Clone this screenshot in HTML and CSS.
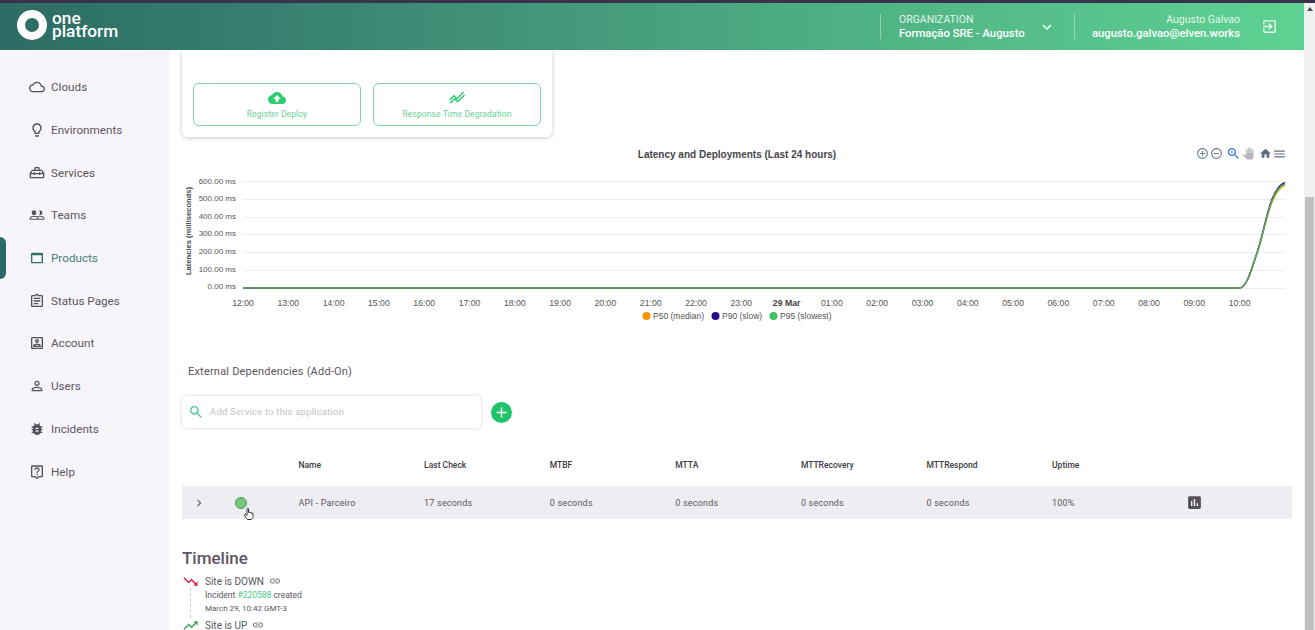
FILE: index.html
```html
<!DOCTYPE html>
<html lang="en">
<head>
  <meta charset="UTF-8">
  <title>One Platform</title>
  <link rel="stylesheet" href="styles.css">
</head>
<body>
  <div class="top-strip"></div>
  <div class="page">
    <div class="app">
      <header class="header">
        <div class="logo">
          <div class="logo-ring"></div>
          <div class="logo-text">
            <div class="logo-line">one</div>
            <div class="logo-line">platform</div>
          </div>
        </div>
        <div class="org">
          <div class="org-label">ORGANIZATION</div>
          <div class="org-name">Formação SRE - Augusto</div>
        </div>
        <svg class="org-chevron" viewBox="0 0 24 24"><path d="M16.59 8.59L12 13.17 7.41 8.59 6 10l6 6 6-6z"/></svg>
        <div class="user">
          <div class="user-name">Augusto Galvao</div>
          <div class="user-mail">augusto.galvao@elven.works</div>
        </div>
        <svg class="logout" viewBox="0 0 24 24"><path d="M10.09 15.59L11.5 17l5-5-5-5-1.41 1.41L12.67 11H3v2h9.67l-2.58 2.59zM19 3H5c-1.11 0-2 .9-2 2v4h2V5h14v14H5v-4H3v4c0 1.1.89 2 2 2h14c1.1 0 2-.9 2-2V5c0-1.1-.9-2-2-2z"/></svg>
      </header>

      <div class="layout">
        <nav class="sidebar">
          <div class="nav-item">
            <svg class="nav-icon" viewBox="0 0 24 24"><path d="M19.35 10.04C18.67 6.59 15.64 4 12 4 9.11 4 6.6 5.64 5.35 8.04 2.34 8.36 0 10.91 0 14c0 3.31 2.69 6 6 6h13c2.76 0 5-2.24 5-5 0-2.64-2.05-4.78-4.65-4.96zM19 18H6c-2.21 0-4-1.79-4-4 0-2.05 1.53-3.76 3.56-3.97l1.07-.11.5-.95C8.08 7.14 9.94 6 12 6c2.62 0 4.88 1.86 5.39 4.43l.3 1.5 1.53.11c1.56.1 2.78 1.41 2.78 2.96 0 1.65-1.35 3-3 3z"/></svg>
            Clouds
          </div>
          <div class="nav-item">
            <svg class="nav-icon" viewBox="0 0 24 24"><path d="M9 21c0 .55.45 1 1 1h4c.55 0 1-.45 1-1v-1H9v1zm3-19C8.14 2 5 5.14 5 9c0 2.38 1.19 4.47 3 5.74V17c0 .55.45 1 1 1h6c.55 0 1-.45 1-1v-2.26c1.81-1.27 3-3.36 3-5.74 0-3.86-3.14-7-7-7zm2.85 11.1l-.85.6V16h-4v-2.3l-.85-.6C7.8 12.16 7 10.63 7 9c0-2.76 2.24-5 5-5s5 2.24 5 5c0 1.63-.8 3.16-2.15 4.1z"/></svg>
            Environments
          </div>
          <div class="nav-item">
            <svg class="nav-icon" viewBox="0 0 24 24"><path d="M8 7V5c0-1.1.9-2 2-2h4c1.1 0 2 .9 2 2v2h2.5c.8 0 1.5.4 1.9 1.1L23 12v6c0 1.1-.9 2-2 2H3c-1.1 0-2-.9-2-2v-6l2.6-3.9C4 7.4 4.7 7 5.5 7H8zm2 0h4V5h-4v2zM5.5 9l-2 3H7v-1h2v1h6v-1h2v1h3.5l-2-3h-13zM3 14v4h18v-4h-4v1h-2v-1H9v1H7v-1H3z"/></svg>
            Services
          </div>
          <div class="nav-item">
            <svg class="nav-icon" viewBox="0 0 24 24"><path d="M16.5 13c-1.2 0-3.07.34-4.5 1-1.43-.67-3.3-1-4.5-1C5.33 13 1 14.08 1 16.25V19h22v-2.75c0-2.17-4.33-3.25-6.5-3.25zm-4 4.5h-10v-1.25c0-.54 2.56-1.75 5-1.75s5 1.21 5 1.75v1.25zm9 0H14v-1.25c0-.46-.2-.86-.52-1.22.88-.3 1.96-.53 3.02-.53 2.44 0 5 1.21 5 1.75v1.25zM7.5 12c1.93 0 3.5-1.57 3.5-3.5S9.43 5 7.5 5 4 6.57 4 8.5 5.57 12 7.5 12zm9 0c1.93 0 3.5-1.57 3.5-3.5S18.43 5 16.5 5c-.5 0-1 .1-1.4.3.9.8 1.4 1.9 1.4 3.2s-.5 2.4-1.4 3.2c.4.2.9.3 1.4.3z"/></svg>
            Teams
          </div>
          <div class="nav-item active">
            <svg class="nav-icon" viewBox="0 0 24 24"><path d="M19 4H5c-1.11 0-2 .9-2 2v12c0 1.1.89 2 2 2h14c1.1 0 2-.9 2-2V6c0-1.1-.89-2-2-2zm0 14H5V8h14v10z"/></svg>
            Products
          </div>
          <div class="nav-item">
            <svg class="nav-icon" viewBox="0 0 24 24"><path d="M19 3h-4.18C14.4 1.84 13.3 1 12 1c-1.3 0-2.4.84-2.82 2H5c-1.1 0-2 .9-2 2v14c0 1.1.9 2 2 2h14c1.1 0 2-.9 2-2V5c0-1.1-.9-2-2-2zm-7 0c.55 0 1 .45 1 1s-.45 1-1 1-1-.45-1-1 .45-1 1-1zm7 16H5V5h14v14zM7 7h10v2H7zm0 4h10v2H7zm0 4h7v2H7z"/></svg>
            Status Pages
          </div>
          <div class="nav-item">
            <svg class="nav-icon" viewBox="0 0 24 24"><path d="M19 5v14H5V5h14m0-2H5c-1.11 0-2 .9-2 2v14c0 1.1.89 2 2 2h14c1.1 0 2-.9 2-2V5c0-1.1-.9-2-2-2zm-7 9c-1.65 0-3-1.35-3-3s1.35-3 3-3 3 1.35 3 3-1.35 3-3 3zm0-4c-.55 0-1 .45-1 1s.45 1 1 1 1-.45 1-1-.45-1-1-1zm6 10H6v-1.53c0-2.5 3.97-3.58 6-3.58s6 1.08 6 3.58V18zm-9.69-2h7.38c-.69-.56-2.38-1.12-3.69-1.12s-3.01.56-3.69 1.12z"/></svg>
            Account
          </div>
          <div class="nav-item">
            <svg class="nav-icon" viewBox="0 0 24 24"><path d="M12 5.9c1.16 0 2.1.94 2.1 2.1s-.94 2.1-2.1 2.1S9.9 9.16 9.9 8s.94-2.1 2.1-2.1m0 9c2.97 0 6.1 1.46 6.1 2.1v1.1H5.9V17c0-.64 3.13-2.1 6.1-2.1M12 4C9.79 4 8 5.79 8 8s1.79 4 4 4 4-1.79 4-4-1.79-4-4-4zm0 9c-2.67 0-8 1.34-8 4v3h16v-3c0-2.66-5.33-4-8-4z"/></svg>
            Users
          </div>
          <div class="nav-item">
            <svg class="nav-icon" viewBox="0 0 24 24"><path d="M20 8h-2.81c-.45-.78-1.07-1.45-1.82-1.96L17 4.41 15.59 3l-2.17 2.17C12.96 5.06 12.49 5 12 5c-.49 0-.96.06-1.41.17L8.41 3 7 4.41l1.62 1.63C7.88 6.55 7.26 7.22 6.81 8H4v2h2.09c-.05.33-.09.66-.09 1v1H4v2h2v1c0 .34.04.67.09 1H4v2h2.81c1.04 1.79 2.97 3 5.19 3s4.15-1.21 5.19-3H20v-2h-2.09c.05-.33.09-.66.09-1v-1h2v-2h-2v-1c0-.34-.04-.67-.09-1H20V8zm-6 8h-4v-2h4v2zm0-4h-4v-2h4v2z"/></svg>
            Incidents
          </div>
          <div class="nav-item">
            <svg class="nav-icon" viewBox="0 0 24 24"><path d="M5 2h14c1.1 0 2 .9 2 2v14c0 1.1-.9 2-2 2h-4l-3 3-3-3H5c-1.1 0-2-.9-2-2V4c0-1.1.9-2 2-2zm0 2v14h4.8l2.2 2.2 2.2-2.2H19V4H5zm6 11h2v2h-2v-2zm1-10c2.21 0 4 1.5 4 3.5 0 2.3-3 2.5-3 5.5h-2c0-3.5 3-3.5 3-5.5 0-.9-.9-1.5-2-1.5s-2 .7-2 1.7H8C8 6.6 9.79 5 12 5z"/></svg>
            Help
          </div>
        </nav>

        <main class="main">
          <section class="card">
            <div class="action-btn">
              <svg class="action-icon" viewBox="0 0 24 24"><path d="M19.35 10.04C18.67 6.59 15.64 4 12 4 9.11 4 6.6 5.64 5.35 8.04 2.34 8.36 0 10.91 0 14c0 3.31 2.69 6 6 6h13c2.76 0 5-2.24 5-5 0-2.64-2.05-4.78-4.65-4.96zM14 13v4h-4v-4H7l5-5 5 5h-3z"/></svg>
              Register Deploy
            </div>
            <div class="action-btn">
              <svg class="action-icon" viewBox="0 0 24 24"><path class="trend-line" d="M2 15l6-6 4 4 9-9M22 8l-9 9-4-4-6 6"/></svg>
              Response Time Degradation
            </div>
          </section>

          <svg class="chart" viewBox="182 145 1110 180">
            <text class="chart-title" x="737" y="158" text-anchor="middle">Latency and Deployments (Last 24 hours)</text>

            <g class="toolbar">
              <svg x="1196" y="147" width="13" height="13" viewBox="0 0 24 24"><path d="M13 7h-2v4H7v2h4v4h2v-4h4v-2h-4V7zm-1-5C6.48 2 2 6.48 2 12s4.48 10 10 10 10-4.48 10-10S17.52 2 12 2zm0 18c-4.41 0-8-3.59-8-8s3.59-8 8-8 8 3.59 8 8-3.59 8-8 8z"/></svg>
              <svg x="1210" y="147" width="13" height="13" viewBox="0 0 24 24"><path d="M7 11v2h10v-2H7zm5-9C6.48 2 2 6.48 2 12s4.48 10 10 10 10-4.48 10-10S17.52 2 12 2zm0 18c-4.41 0-8-3.59-8-8s3.59-8 8-8 8 3.59 8 8-3.59 8-8 8z"/></svg>
              <svg class="tool-active" x="1226" y="146" width="15" height="15" viewBox="0 0 24 24"><path d="M15.5 14h-.79l-.28-.27C15.41 12.59 16 11.11 16 9.5 16 5.91 13.09 3 9.5 3S3 5.91 3 9.5 5.91 16 9.5 16c1.61 0 3.09-.59 4.23-1.57l.27.28v.79l5 4.99L20.49 19l-4.99-5zm-6 0C7.01 14 5 11.99 5 9.5S7.01 5 9.5 5 14 7.01 14 9.5 11.99 14 9.5 14zM7 9h2V7h1v2h2v1h-2v2H9v-2H7V9z"/></svg>
              <svg class="tool-light" x="1242" y="147" width="12" height="13" viewBox="0 0 24 24"><path d="M23 5.5V20c0 2.2-1.8 4-4 4h-7.3c-1.08 0-2.1-.43-2.85-1.19L1 14.83s1.26-1.23 1.3-1.25c.22-.19.49-.29.79-.29.22 0 .42.06.6.16.04.01 4.31 2.46 4.31 2.46V4c0-.83.67-1.5 1.5-1.5S11 3.17 11 4v7h1V1.5c0-.83.67-1.5 1.5-1.5S15 .67 15 1.5V11h1V2.5c0-.83.67-1.5 1.5-1.5s1.5.67 1.5 1.5V11h1V5.5c0-.83.67-1.5 1.5-1.5s1.5.67 1.5 1.5z"/></svg>
              <svg class="tool-dark" x="1259" y="147" width="13" height="13" viewBox="0 0 24 24"><path d="M10 20v-6h4v6h5v-8h3L12 3 2 12h3v8z"/></svg>
              <svg class="tool-dark" x="1272" y="147" width="15" height="14" viewBox="0 0 24 24"><path d="M3 18h18v-2H3v2zm0-5h18v-2H3v2zm0-7v2h18V6H3z"/></svg>
            </g>

            <g class="grid">
              <line x1="243" y1="181.5" x2="1285" y2="181.5"/>
              <line x1="243" y1="199.5" x2="1285" y2="199.5"/>
              <line x1="243" y1="217.5" x2="1285" y2="217.5"/>
              <line x1="243" y1="234.5" x2="1285" y2="234.5"/>
              <line x1="243" y1="252.5" x2="1285" y2="252.5"/>
              <line x1="243" y1="270.5" x2="1285" y2="270.5"/>
              <line x1="243" y1="288.5" x2="1285" y2="288.5"/>
            </g>

            <text class="y-title" transform="translate(191 231) rotate(-90)" text-anchor="middle">Latencies (milliseconds)</text>
            <g class="y-labels" text-anchor="end">
              <text x="236" y="183.5">600.00 ms</text>
              <text x="236" y="200.5">500.00 ms</text>
              <text x="236" y="218.5">400.00 ms</text>
              <text x="236" y="236">300.00 ms</text>
              <text x="236" y="254">200.00 ms</text>
              <text x="236" y="271.5">100.00 ms</text>
              <text x="236" y="289">0.00 ms</text>
            </g>

            <g class="x-labels" text-anchor="middle">
              <text x="243" y="306">12:00</text>
              <text x="288.3" y="306">13:00</text>
              <text x="333.6" y="306">14:00</text>
              <text x="378.9" y="306">15:00</text>
              <text x="424.2" y="306">16:00</text>
              <text x="469.5" y="306">17:00</text>
              <text x="514.8" y="306">18:00</text>
              <text x="560.1" y="306">19:00</text>
              <text x="605.4" y="306">20:00</text>
              <text x="650.7" y="306">21:00</text>
              <text x="696" y="306">22:00</text>
              <text x="741.3" y="306">23:00</text>
              <text class="x-date" x="786.6" y="306">29 Mar</text>
              <text x="831.9" y="306">01:00</text>
              <text x="877.2" y="306">02:00</text>
              <text x="922.5" y="306">03:00</text>
              <text x="967.8" y="306">04:00</text>
              <text x="1013.1" y="306">05:00</text>
              <text x="1058.4" y="306">06:00</text>
              <text x="1103.7" y="306">07:00</text>
              <text x="1149" y="306">08:00</text>
              <text x="1194.3" y="306">09:00</text>
              <text x="1239.6" y="306">10:00</text>
            </g>

            <path class="series p50" d="M243 288H1239C1247 288 1251 270 1258 250C1266 226 1270 192 1285 185"/>
            <path class="series p90" d="M243 288H1239C1247 288 1251 270 1258 250C1266 224 1270 188 1285 182.5"/>
            <path class="series p95" d="M243 288H1239C1247 288 1251 270 1258 250C1266 225 1270 190 1285 184"/>

            <g class="legend">
              <circle cx="646.5" cy="316" r="4" fill="#f59300"/>
              <text x="653" y="319">P50 (median)</text>
              <circle cx="715.5" cy="316" r="4" fill="#2a0f8a"/>
              <text x="722" y="319">P90 (slow)</text>
              <circle cx="773.5" cy="316" r="4" fill="#40c25c"/>
              <text x="780" y="319">P95 (slowest)</text>
            </g>
          </svg>

          <h2 class="section-title">External Dependencies (Add-On)</h2>

          <div class="search-row">
            <div class="search-box">
              <svg class="search-icon" viewBox="0 0 24 24"><path d="M15.5 14h-.79l-.28-.27C15.41 12.59 16 11.11 16 9.5 16 5.91 13.09 3 9.5 3S3 5.91 3 9.5 5.91 16 9.5 16c1.61 0 3.09-.59 4.23-1.57l.27.28v.79l5 4.99L20.49 19l-4.99-5zm-6 0C7.01 14 5 11.99 5 9.5S7.01 5 9.5 5 14 7.01 14 9.5 11.99 14 9.5 14z"/></svg>
              <span class="search-text">Add Service to this application</span>
            </div>
            <div class="add-btn">
              <svg viewBox="0 0 24 24"><path d="M19 13h-6v6h-2v-6H5v-2h6V5h2v6h6v2z"/></svg>
            </div>
          </div>

          <div class="table">
            <div class="table-head">
              <span></span><span></span>
              <span>Name</span>
              <span>Last Check</span>
              <span>MTBF</span>
              <span>MTTA</span>
              <span>MTTRecovery</span>
              <span>MTTRespond</span>
              <span>Uptime</span>
            </div>
            <div class="table-row">
              <svg class="row-chevron" viewBox="0 0 24 24"><path d="M8.59 16.59L13.17 12 8.59 7.41 10 6l6 6-6 6z"/></svg>
              <span class="status-dot"></span>
              <span>API - Parceiro</span>
              <span>17 seconds</span>
              <span>0 seconds</span>
              <span>0 seconds</span>
              <span>0 seconds</span>
              <span>0 seconds</span>
              <span>100%</span>
              <svg class="row-chart" viewBox="0 0 24 24"><path d="M19 3H5c-1.1 0-2 .9-2 2v14c0 1.1.9 2 2 2h14c1.1 0 2-.9 2-2V5c0-1.1-.9-2-2-2zM9 17H7v-7h2v7zm4 0h-2V7h2v10zm4 0h-2v-4h2v4z"/></svg>
              <svg class="hand-cursor" viewBox="0 0 24 28"><path d="M8 14V4c0-2 3-2 3 0v7c0-1.5 3-1.5 3 0v1c0-1.5 3-1.5 3 0v1c0-1.5 3-1.5 3 0v6c0 3-2 5-3 6H9c-2-2-4-5-6-8-1-2 1-3 3-2l2 2z"/></svg>
            </div>
          </div>

          <h2 class="timeline-title">Timeline</h2>
          <div class="event">
            <svg class="event-icon down" viewBox="0 0 24 24"><path d="M16 18l2.29-2.29-4.88-4.88-4 4L2 7.41 3.41 6l6 6 4-4 6.3 6.29L22 12v6z"/></svg>
            Site is DOWN
            <svg class="link-icon" viewBox="0 0 24 24"><path d="M3.9 12c0-1.71 1.39-3.1 3.1-3.1h4V7H7c-2.76 0-5 2.24-5 5s2.24 5 5 5h4v-1.9H7c-1.71 0-3.1-1.39-3.1-3.1zM8 13h8v-2H8v2zm9-6h-4v1.9h4c1.71 0 3.1 1.39 3.1 3.1s-1.39 3.1-3.1 3.1h-4V17h4c2.76 0 5-2.24 5-5s-2.24-5-5-5z"/></svg>
          </div>
          <div class="event-detail">
            <div>Incident <span class="incident-link">#220588</span> created</div>
            <div class="event-date">March 29, 10:42 GMT-3</div>
          </div>
          <div class="event">
            <svg class="event-icon up" viewBox="0 0 24 24"><path d="M16 6l2.29 2.29-4.88 4.88-4-4L2 16.59 3.41 18l6-6 4 4 6.3-6.29L22 12V6z"/></svg>
            Site is UP
            <svg class="link-icon" viewBox="0 0 24 24"><path d="M3.9 12c0-1.71 1.39-3.1 3.1-3.1h4V7H7c-2.76 0-5 2.24-5 5s2.24 5 5 5h4v-1.9H7c-1.71 0-3.1-1.39-3.1-3.1zM8 13h8v-2H8v2zm9-6h-4v1.9h4c1.71 0 3.1 1.39 3.1 3.1s-1.39 3.1-3.1 3.1h-4V17h4c2.76 0 5-2.24 5-5s-2.24-5-5-5z"/></svg>
          </div>
        </main>
      </div>
    </div>

    <div class="scrollbar">
      <div class="scroll-arrow"></div>
      <div class="scroll-thumb"></div>
    </div>
  </div>
</body>
</html>
```

FILE: styles.css
```css
:root {
  --green: #2ecc71;
  --green-soft: #7fd6a5;
  --text: #5b5660;
  --side-bg: #f7f5f9;
}
* { box-sizing: border-box; }
html, body {
  height: 100%;
}
body {
  margin: 0;
  display: flex;
  flex-direction: column;
  overflow: hidden;
  background: #fff;
  font-family: Roboto, sans-serif;
  color: var(--text);
}
.top-strip {
  height: 3px;
  flex: none;
  background: #38334a;
}
.page {
  flex: 1;
  display: flex;
  min-height: 0;
}
.app {
  flex: 1;
  display: flex;
  flex-direction: column;
  min-width: 0;
}

/* header */
.header {
  height: 47px;
  flex: none;
  display: flex;
  align-items: center;
  color: #fff;
  background: linear-gradient(90deg, #2c6c64, #3a8472 25%, #4fb184 65%, #5ed292);
}
.logo {
  display: flex;
  align-items: center;
  margin-left: 17px;
  margin-right: auto;
  margin-top: -3px;
}
.logo-ring {
  width: 30px;
  height: 30px;
  border: 8px solid #fff;
  border-radius: 50%;
}
.logo-text {
  margin-left: 5px;
  margin-top: -1px;
  font-size: 17.3px;
  font-weight: 500;
}
.logo-line {
  height: 13px;
  line-height: 13px;
}
.org {
  width: 193px;
  height: 25px;
  padding-left: 18px;
  border-left: 1px solid rgba(255,255,255,0.4);
  display: flex;
  flex-direction: column;
  justify-content: center;
}
.org-label {
  font-size: 10.5px;
  line-height: 14px;
  color: #e2f5ea;
}
.org-name {
  font-size: 11.3px;
  font-weight: 500;
  line-height: 13px;
  white-space: nowrap;
}
.org-chevron {
  width: 18px;
  height: 18px;
  fill: #fff;
  margin-left: -35px;
  margin-right: 18px;
}
.user {
  width: 166px;
  height: 25px;
  border-left: 1px solid rgba(255,255,255,0.4);
  text-align: right;
  display: flex;
  flex-direction: column;
  justify-content: center;
}
.user-name {
  font-size: 10.5px;
  line-height: 14px;
  color: #e2f5ea;
}
.user-mail {
  font-size: 11.3px;
  font-weight: 500;
  line-height: 13px;
}
.logout {
  width: 17px;
  height: 17px;
  fill: #e6f7ee;
  margin-left: 21px;
  margin-right: 26px;
}

.layout {
  flex: 1;
  display: flex;
  min-height: 0;
}

/* sidebar */
.sidebar {
  width: 170px;
  flex: none;
  padding-top: 16px;
  background: var(--side-bg);
}
.nav-item {
  position: relative;
  height: 42.7px;
  padding-left: 29px;
  display: flex;
  align-items: center;
  gap: 6px;
  font-size: 11.7px;
}
.nav-icon {
  width: 16px;
  height: 16px;
  fill: #55505a;
}
.nav-item.active {
  color: #3f7f7a;
}
.nav-item.active .nav-icon {
  fill: #2f6f68;
}
.nav-item.active::before {
  content: "";
  position: absolute;
  left: 0;
  top: 0;
  width: 6px;
  height: 100%;
  background: #2a6a64;
  border-radius: 0 6px 6px 0;
}

/* content */
.main {
  flex: 1;
  min-width: 0;
  padding: 0 12px;
  overflow: hidden;
}
.card {
  width: 370px;
  height: 87px;
  padding: 33px 11px 0;
  display: flex;
  gap: 12px;
  border-radius: 0 0 5px 5px;
  box-shadow: 0 1px 4px rgba(60,50,80,0.28);
}
.action-btn {
  flex: 1;
  height: 43px;
  border: 1px solid var(--green-soft);
  border-radius: 6px;
  display: flex;
  flex-direction: column;
  align-items: center;
  padding-top: 5px;
  font-size: 8.5px;
  line-height: 12px;
  color: #6ccf98;
  letter-spacing: 0.1px;
}
.action-icon {
  width: 18px;
  height: 18px;
  margin-bottom: 1px;
  fill: var(--green);
}
.trend-line {
  fill: none;
  stroke: var(--green);
  stroke-width: 2;
}

.chart {
  display: block;
  width: 1110px;
  height: 180px;
  margin-top: 8px;
  font-family: "Liberation Sans", sans-serif;
}
.chart-title {
  font-size: 10px;
  font-weight: 700;
  fill: #47454b;
}
.toolbar {
  fill: #6e8192;
}
.tool-active { fill: #2f6fe0; }
.tool-light { fill: #b5b8bd; }
.tool-dark { fill: #5f6e7c; }
.grid line {
  stroke: #ececec;
  stroke-width: 1;
}
.y-title {
  font-size: 7.6px;
  font-weight: 700;
  fill: #4a4a4a;
}
.y-labels text {
  font-size: 8px;
  fill: #555;
}
.x-labels text {
  font-size: 8.7px;
  fill: #555;
}
.x-labels .x-date {
  font-weight: 700;
  fill: #444;
}
.series {
  fill: none;
  stroke-width: 1.5;
}
.p50 { stroke: #f5b400; }
.p90 { stroke: #2a2a70; }
.p95 { stroke: #5aa76a; }
.legend text {
  font-size: 8.5px;
  fill: #555;
}

.section-title {
  margin: 39px 0 0 6px;
  font-size: 11px;
  font-weight: 400;
  line-height: 16px;
  letter-spacing: 0.2px;
}
.search-row {
  display: flex;
  align-items: center;
  margin-top: 16px;
}
.search-box {
  width: 299px;
  height: 32px;
  padding-left: 6px;
  display: flex;
  align-items: center;
  gap: 6px;
  border-radius: 4px;
  box-shadow: 0 0 3px rgba(60,50,80,0.25);
  font-size: 9.5px;
  letter-spacing: 0.2px;
  color: #c4c2c8;
}
.search-icon {
  width: 16px;
  height: 16px;
  fill: #48c48a;
}
.search-text {
  margin-top: -1px;
}
.add-btn {
  width: 21px;
  height: 21px;
  margin-left: 10px;
  border-radius: 50%;
  background: #1fc46a;
  display: flex;
  align-items: center;
  justify-content: center;
}
.add-btn svg {
  width: 17px;
  height: 17px;
  fill: #fff;
}

.table {
  margin-top: 27px;
  font-size: 8.5px;
}
.table-head, .table-row {
  display: grid;
  grid-template-columns: 40px 76.5px repeat(7, 125.6px) 1fr;
  align-items: center;
}
.table-head {
  height: 20px;
  margin-bottom: 11px;
  font-weight: 500;
  color: #3e3b42;
}
.table-row {
  position: relative;
  height: 33px;
  font-size: 9px;
  letter-spacing: 0.2px;
  background: #eeedf1;
}
.row-chevron {
  width: 14px;
  height: 14px;
  margin-left: 10px;
  fill: #66626b;
}
.status-dot {
  width: 12px;
  height: 12px;
  margin-left: 13px;
  border-radius: 50%;
  background: #72c87c;
  border: 1px solid #4d9a5b;
}
.row-chart {
  width: 17px;
  height: 17px;
  margin-left: 8px;
  fill: #55505a;
}
.hand-cursor {
  position: absolute;
  left: 61px;
  top: 21px;
  width: 12px;
  height: 14px;
  fill: #fff;
  stroke: #333;
  stroke-width: 2;
}

.timeline-title {
  margin: 28px 0 5px;
  font-size: 17px;
  font-weight: 500;
  line-height: 22px;
}
.event {
  height: 14px;
  display: flex;
  align-items: center;
  font-size: 10px;
}
.event-icon {
  width: 17px;
  height: 17px;
  margin-right: 6px;
}
.event-icon.down { fill: #d8204f; }
.event-icon.up { fill: #3ea55a; }
.link-icon {
  width: 12px;
  height: 12px;
  margin-left: 5px;
  fill: #77737c;
}
.event-detail {
  margin-left: 8px;
  padding-left: 14px;
  border-left: 1px dashed #c8c6cc;
  font-size: 8.5px;
  line-height: 14px;
  height: 30px;
}
.event-date {
  font-size: 8px;
}
.incident-link {
  color: #4cc98b;
}

.scrollbar {
  width: 11px;
  flex: none;
  display: flex;
  flex-direction: column;
  align-items: center;
  background: #f1f1f1;
}
.scroll-arrow {
  margin-top: 4px;
  border-left: 3px solid transparent;
  border-right: 3px solid transparent;
  border-bottom: 4px solid #505050;
}
.scroll-thumb {
  width: 9px;
  flex: 1;
  margin-top: 186px;
  background: #c1c1c1;
}
```
